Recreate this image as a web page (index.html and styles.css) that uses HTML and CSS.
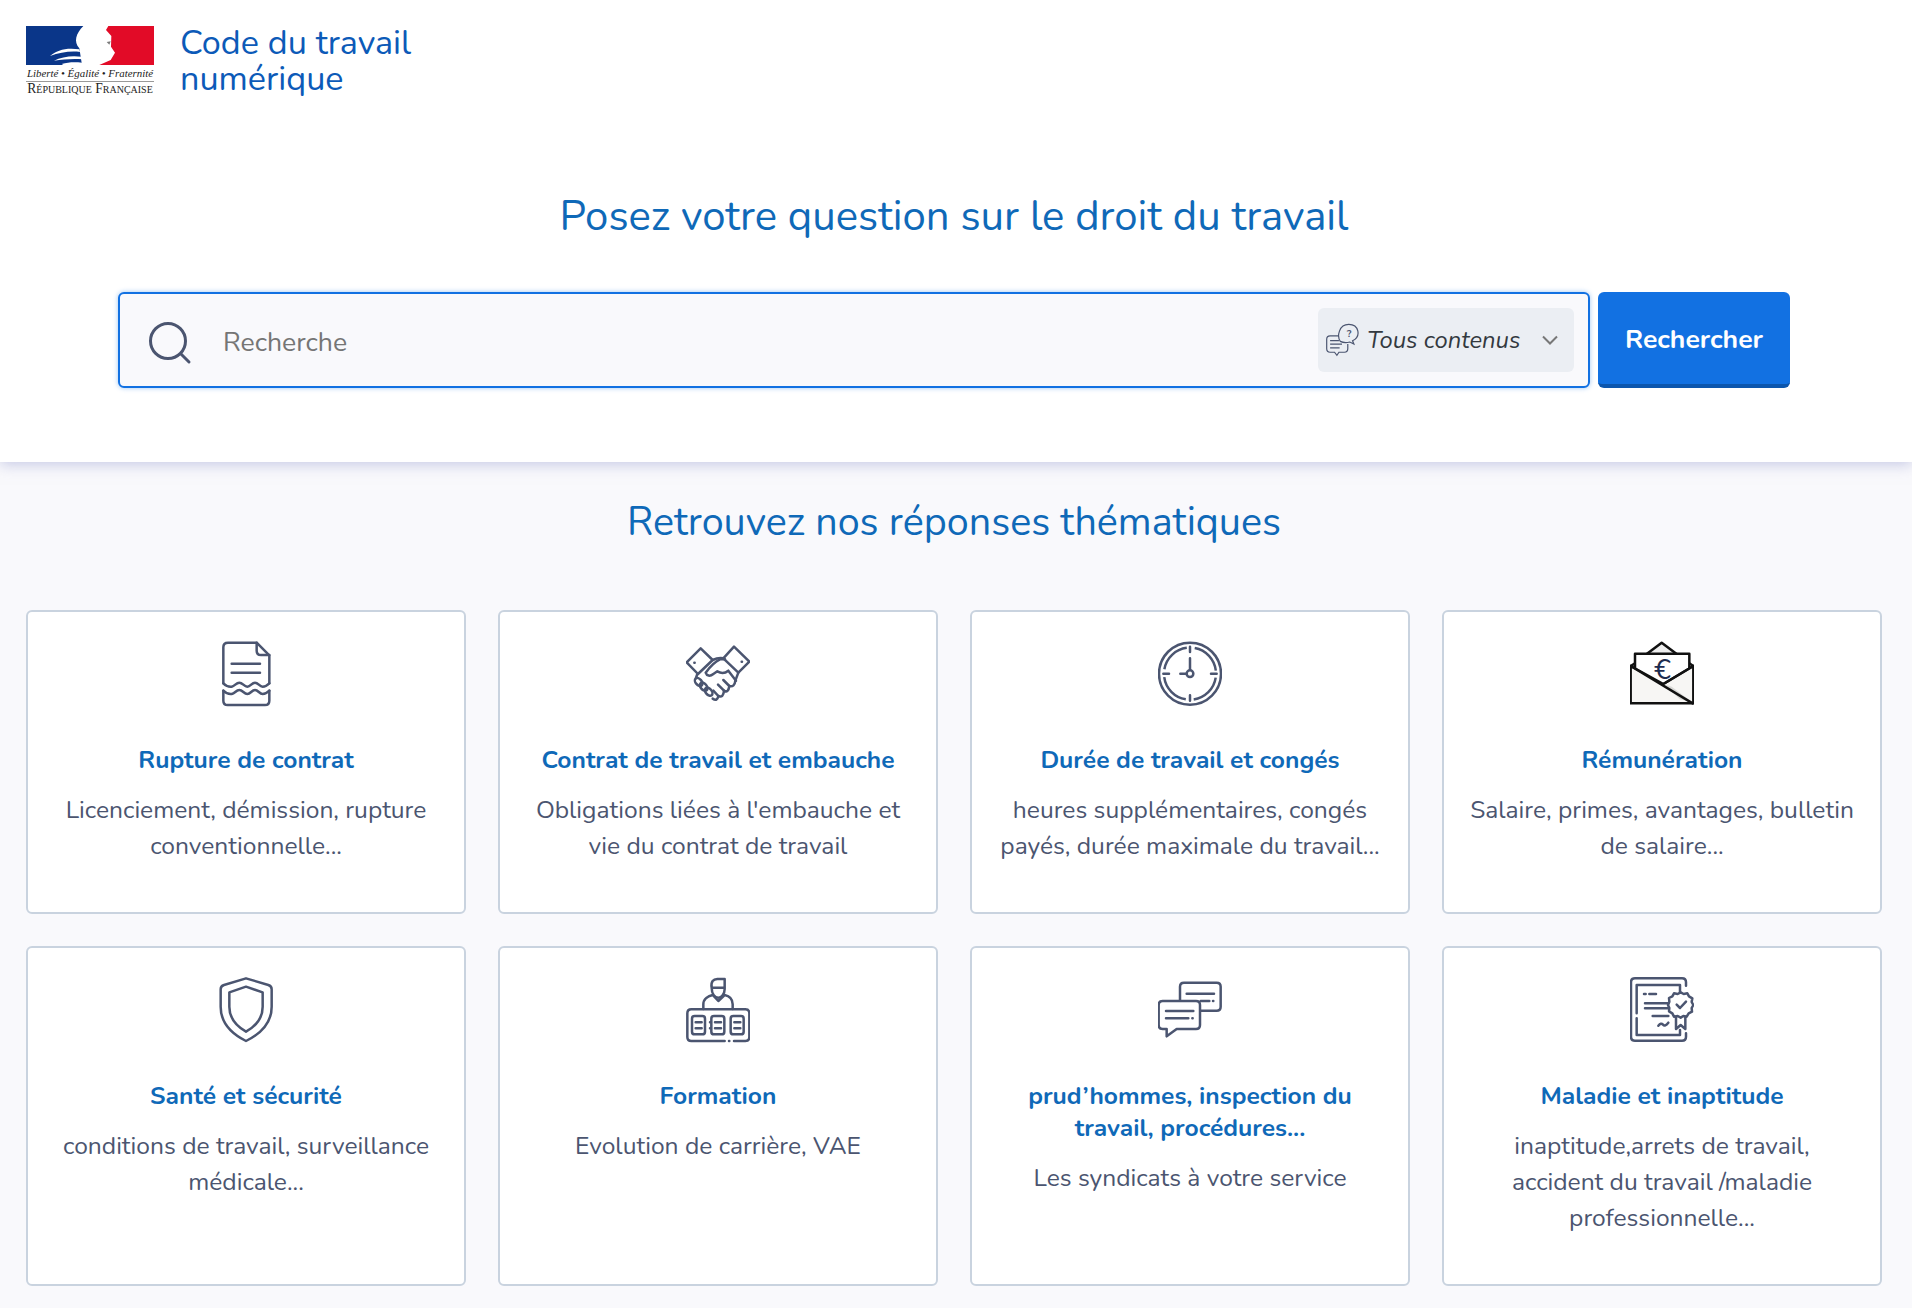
FILE: index.html
```html
<!DOCTYPE html>
<html lang="fr">
<head>
  <meta charset="utf-8" />
  <title>Code du travail numérique</title>
  <link rel="stylesheet" href="styles.css">
</head>
<body>
<div class="cdt-hero">
  <header class="cdt-header">
    <div class="cdt-logo">
      <svg class="cdt-flag" viewBox="78 78 384 117" preserveAspectRatio="none">
        <rect x="78" y="78" width="384" height="117" fill="#fff"/>
        <path fill="#0a3689" d="M78 78H250C228 100 220 125 238 145L246 195H78Z"/>
        <path fill="#fff" d="M150 168C170 150 200 142 238 148L240 156C210 152 180 158 150 168Z"/>
        <path fill="#fff" d="M162 182C185 170 215 166 245 170L248 178C220 175 190 178 162 182Z"/>
        <path fill="#fff" d="M185 192C205 186 225 186 246 188V195H190Z"/>
        <path fill="#e20b27" d="M325 78H462V195H298L332 180L345 158L333 140L334 108L318 90Z"/>
        <path fill="#7a7a7a" d="M320 126L332 124L328 134Z"/>
      </svg>
      <div class="cdt-logo-motto">Liberté • Égalité • Fraternité</div>
      <div class="cdt-logo-name">République Française</div>
    </div>
    <div class="cdt-sitename">Code du travail<br>numérique</div>
  </header>
  <h1 class="cdt-h1">Posez votre question sur le droit du travail</h1>
  <form class="cdt-search">
    <div class="cdt-search-box">
      <svg class="cdt-search-icon" viewBox="0 0 48 48">
        <circle cx="21" cy="21" r="17.5"/>
        <path d="M34 34L42 42"/>
      </svg>
      <span class="cdt-placeholder">Recherche</span>
      <div class="cdt-select">
        <svg class="cdt-select-icon" viewBox="105 130 100 100">
          <path d="M150 184C140 170 145 134 175 134C205 134 212 170 186 182L190 192L178 186C170 188 158 188 150 184Z"/>
          <path d="M146 168H120Q110 168 110 178V206Q110 216 120 216H133L140 225L146 216H162Q172 216 172 206V192"/>
          <path d="M120 182H146M120 192H155M120 203H148"/>
          <text x="176" y="172" class="cdt-select-q">?</text>
        </svg>
        <span class="cdt-select-label">Tous contenus</span>
        <svg class="cdt-chevron" viewBox="0 0 16 10"><path d="M1 1.5L8 8.5L15 1.5"/></svg>
      </div>
    </div>
    <button class="cdt-button" type="button">Rechercher</button>
  </form>
</div>

<main class="cdt-themes">
  <h2 class="cdt-h2">Retrouvez nos réponses thématiques</h2>
  <div class="cdt-grid">

    <a class="cdt-card">
      <svg class="cdt-icon" viewBox="72 30 192 204">
        <path d="M100 160V52Q100 38 114 38H200L238 76V160"/>
        <path d="M200 38V62Q200 75 213 75H238"/>
        <path d="M125 101H210M125 128H210"/>
        <path d="M100 160C108 168 117 171 125 170C135 168 138 158 148 158C158 158 162 170 172 170C182 170 185 158 195 158C205 158 208 170 218 170C226 170 232 166 238 160"/>
        <path d="M100 182C108 190 117 193 125 192C135 190 138 180 148 180C158 180 162 192 172 192C182 192 185 180 195 180C205 180 208 192 218 192C226 192 232 188 238 182"/>
        <path d="M100 182V212Q100 225 113 225H225Q238 225 238 212V182"/>
      </svg>
      <h3 class="cdt-card-title">Rupture de contrat</h3>
      <p class="cdt-card-text">Licenciement, démission, rupture conventionnelle...</p>
    </a>

    <a class="cdt-card">
      <svg class="cdt-icon" viewBox="78 30 192 204">
        <path d="M122 55L80 97L114 132L158 90Z"/>
        <path d="M222 50L268 95L235 128L190 85Z"/>
        <path d="M103 98h1M245 95h1"/>
        <path d="M158 90Q175 82 190 85"/>
        <path d="M195 88H180C165 95 150 110 137 128C140 138 150 140 160 132L172 124C182 130 195 130 205 122L228 152"/>
        <path d="M235 128L226 152Q224 172 208 168Q205 190 192 182Q190 205 175 198Q172 215 158 206"/>
        <path d="M112 132L108 144"/>
        <ellipse cx="116" cy="156" rx="14" ry="9" transform="rotate(50 116 156)"/>
        <ellipse cx="131" cy="170" rx="14" ry="9" transform="rotate(50 131 170)"/>
        <ellipse cx="146" cy="185" rx="14" ry="9" transform="rotate(50 146 185)"/>
        <path d="M208 168L190 150M192 182L174 164M175 198L160 182"/>
      </svg>
      <h3 class="cdt-card-title">Contrat de travail et embauche</h3>
      <p class="cdt-card-text">Obligations liées à l'embauche et vie du contrat de travail</p>
    </a>

    <a class="cdt-card">
      <svg class="cdt-icon" viewBox="84 30 192 204">
        <circle cx="180" cy="131" r="93"/>
        <circle class="cdt-icon-dash" cx="180" cy="131" r="78"/>
        <path d="M180 50V66M180 196V212M100 131H117M243 131H260"/>
        <path d="M180 85V118M151 131H168"/>
        <circle cx="180" cy="131" r="10"/>
      </svg>
      <h3 class="cdt-card-title">Durée de travail et congés</h3>
      <p class="cdt-card-text">heures supplémentaires, congés payés, durée maximale du travail...</p>
    </a>

    <a class="cdt-card">
      <svg class="cdt-icon cdt-icon--mail" viewBox="90 30 192 204">
        <path class="cdt-mail-back" d="M140 72L185 38L230 72"/>
        <path class="cdt-mail-back" d="M92 108L105 100M280 108L268 100"/>
        <path class="cdt-mail-paper" d="M105 190V71H268V190Z"/>
        <text class="cdt-mail-euro" x="187" y="147">€</text>
        <path class="cdt-mail-body" d="M92 108L190 162L280 108V220H92Z"/>
        <path class="cdt-mail-shade" d="M190 162L215 170L276 216L240 208Z"/>
        <path d="M92 108L278 220M190 162L280 108"/>
      </svg>
      <h3 class="cdt-card-title">Rémunération</h3>
      <p class="cdt-card-text">Salaire, primes, avantages, bulletin de salaire...</p>
    </a>

    <a class="cdt-card">
      <svg class="cdt-icon" viewBox="72 33 192 204">
        <path d="M168 40L235 60Q245 63 245 73V125C245 170 215 205 168 228C122 205 92 170 92 125V73Q92 63 102 60Z"/>
        <path d="M168 65L218 82V125C218 160 195 185 168 200C142 185 118 160 118 125V82Z"/>
      </svg>
      <h3 class="cdt-card-title">Santé et sécurité</h3>
      <p class="cdt-card-text">conditions de travail, surveillance médicale...</p>
    </a>

    <a class="cdt-card">
      <svg class="cdt-icon" viewBox="78 33 192 204">
        <path d="M155 68C152 50 160 42 172 42H194V72C194 88 184 98 175 98C165 98 155 88 155 68H193"/>
        <path d="M130 132V118C130 102 145 93 158 90L175 108L194 90C208 93 218 102 218 118V132"/>
        <path d="M194 228H94Q82 228 82 216V145Q82 133 94 133H256Q268 133 268 145V216Q268 228 256 228H222"/>
        <path d="M207 228h1"/>
        <rect x="96" y="153" width="39" height="55" rx="8"/>
        <rect x="154" y="153" width="39" height="55" rx="8"/>
        <rect x="212" y="153" width="39" height="55" rx="8"/>
        <path d="M107 172H125M107 190H125M165 172H183M165 190H183M223 172H241M223 190H241M150 172h1M150 190h1"/>
      </svg>
      <h3 class="cdt-card-title">Formation</h3>
      <p class="cdt-card-text">Evolution de carrière, VAE</p>
    </a>

    <a class="cdt-card">
      <svg class="cdt-icon" viewBox="84 33 192 204">
        <path d="M150 105V65Q150 53 162 53H260Q272 53 272 65V125Q272 137 260 137H212"/>
        <path d="M170 86H252M212 108H238M249 108h1"/>
        <path d="M98 108H198Q210 108 210 120V180Q210 192 198 192H140L110 214V192H98Q86 192 86 180V120Q86 108 98 108Z"/>
        <path d="M108 138H190M108 160H175M187 160h1"/>
      </svg>
      <h3 class="cdt-card-title">prud’hommes, inspection du travail, procédures...</h3>
      <p class="cdt-card-text">Les syndicats à votre service</p>
    </a>

    <a class="cdt-card">
      <svg class="cdt-icon" viewBox="90 33 192 204">
        <path d="M258 62V52Q258 40 246 40H105Q93 40 93 52V215Q93 227 105 227H246Q258 227 258 215V205"/>
        <path d="M240 82V60H110V145M110 160V210H240V195"/>
        <path d="M132 87h5M148 87H168M135 115H205M135 130H205M158 153H205"/>
        <path d="M175 182Q183 172 189 179T205 173"/>
        <path d="M242 82L251 87L262 85L267 94L277 100L275 111L280 120L275 129L276 140L266 145L260 155L250 153L242 158L233 153L222 155L217 145L207 139L208 129L204 120L208 110L207 99L217 94L222 85L233 87Z"/>
        <path d="M230 119L240 129L258 110"/>
        <path d="M228 155V192L242 180L256 192V155"/>
      </svg>
      <h3 class="cdt-card-title">Maladie et inaptitude</h3>
      <p class="cdt-card-text">inaptitude,arrets de travail, accident du travail /maladie professionnelle...</p>
    </a>

  </div>
</main>
</body>
</html>
```

FILE: styles.css
```css
:root {
  --bleu: #0f69b8;
  --action: #1271e2;
  --texte: #4b5570;
  --fond: #f9f9fc;
}
html, body {
  margin: 0;
  padding: 0;
}
body {
  background-color: var(--fond);
  font-family: "Nunito", "Noto Sans", sans-serif;
  color: var(--texte);
}

/* haut de page */
.cdt-hero {
  position: relative;
  background-color: #fff;
  box-shadow: 0 2px 14px rgba(150, 155, 205, .55);
  padding-bottom: 74px;
}
.cdt-header {
  display: flex;
  height: 100px;
  box-sizing: border-box;
  padding: 26px 0 0 26px;
}
.cdt-logo {
  width: 128px;
  font-family: "Liberation Serif", serif;
  color: #222;
  white-space: nowrap;
}
.cdt-flag {
  display: block;
  width: 128px;
  height: 39px;
}
.cdt-logo-motto {
  margin-top: 3px;
  padding-bottom: 2px;
  border-bottom: 1px solid #999;
  font-size: 10.9px;
  line-height: 11px;
  font-style: italic;
  text-align: center;
}
.cdt-logo-name {
  font-size: 13.6px;
  line-height: 14px;
  font-variant: small-caps;
  text-align: center;
}
.cdt-sitename {
  margin: -1px 0 0 26px;
  color: #0c5ab8;
  font-size: 34.2px;
  line-height: 36px;
}
.cdt-h1 {
  margin: 93px 0 51px;
  padding-right: 4px;
  color: var(--bleu);
  font-size: 41.9px;
  line-height: 48px;
  font-weight: 400;
  text-align: center;
}

/* recherche */
.cdt-search {
  display: flex;
  gap: 8px;
  padding: 0 122px 0 118px;
}
.cdt-search-box {
  flex: 1;
  display: flex;
  align-items: center;
  height: 96px;
  box-sizing: border-box;
  padding: 0 14px 0 27px;
  background-color: var(--fond);
  border: 2px solid var(--action);
  border-radius: 6px;
  box-shadow: 0 0 5px rgba(18, 113, 226, .4);
}
.cdt-search-icon {
  width: 48px;
  height: 48px;
  margin-top: 8px;
  fill: none;
  stroke: var(--texte);
  stroke-width: 3;
  stroke-linecap: round;
}
.cdt-placeholder {
  flex: 1;
  margin-left: 28px;
  padding-top: 4px;
  color: #757575;
  font-size: 26.6px;
}
.cdt-select {
  display: flex;
  align-items: center;
  width: 256px;
  height: 64px;
  box-sizing: border-box;
  padding: 0 16px 0 7px;
  background-color: #ebeef3;
  border-radius: 6px;
}
.cdt-select-icon {
  width: 34px;
  height: 34px;
  fill: none;
  stroke: var(--texte);
  stroke-width: 3.5;
}
.cdt-select-q {
  fill: var(--texte);
  stroke: none;
  font-size: 30px;
  font-weight: 700;
  text-anchor: middle;
}
.cdt-select-label {
  flex: 1;
  margin-left: 8px;
  color: #33393f;
  font-size: 23.8px;
  font-style: italic;
}
.cdt-chevron {
  width: 16px;
  height: 10px;
  fill: none;
  stroke: #777;
  stroke-width: 2;
}
.cdt-button {
  width: 192px;
  height: 96px;
  box-sizing: border-box;
  padding-top: 3px;
  background-color: var(--action);
  border: 0;
  border-bottom: 4px solid #0c56ad;
  border-radius: 6px;
  color: #fff;
  font-family: inherit;
  font-size: 26.6px;
  font-weight: 700;
}

/* themes */
.cdt-themes {
  padding: 36px 30px 22px 26px;
}
.cdt-h2 {
  margin: 0 0 64px;
  color: var(--bleu);
  font-size: 39.5px;
  line-height: 48px;
  font-weight: 400;
  text-align: center;
}
.cdt-grid {
  display: grid;
  grid-template-columns: repeat(4, 1fr);
  gap: 32px;
}
.cdt-card {
  display: block;
  padding: 28px 25px 48px;
  background-color: #fff;
  border: 2px solid #c9d3df;
  border-radius: 6px;
  text-align: center;
}
.cdt-icon {
  display: block;
  width: 64px;
  height: 68px;
  margin: 0 auto;
  fill: none;
  stroke: var(--texte);
  stroke-width: 7.5;
  stroke-linecap: round;
  stroke-linejoin: round;
}
.cdt-icon-dash {
  stroke-dasharray: 98 24.5;
  stroke-dashoffset: -12.25;
  stroke-linecap: butt;
}
.cdt-icon--mail {
  stroke: #111;
}
.cdt-mail-back {
  fill: #eee;
}
.cdt-mail-paper {
  fill: #fff;
}
.cdt-mail-body {
  fill: #f7f6f4;
}
.cdt-mail-shade {
  fill: #d9d9d6;
  stroke: none;
}
.cdt-mail-euro {
  fill: #1d2c4f;
  stroke: none;
  font-size: 84px;
  text-anchor: middle;
}
.cdt-card-title {
  margin: 36px 0 16px;
  color: var(--bleu);
  font-size: 24.6px;
  line-height: 32px;
  font-weight: 700;
}
.cdt-card-text {
  margin: 0;
  font-size: 24.6px;
  line-height: 36px;
}
```
